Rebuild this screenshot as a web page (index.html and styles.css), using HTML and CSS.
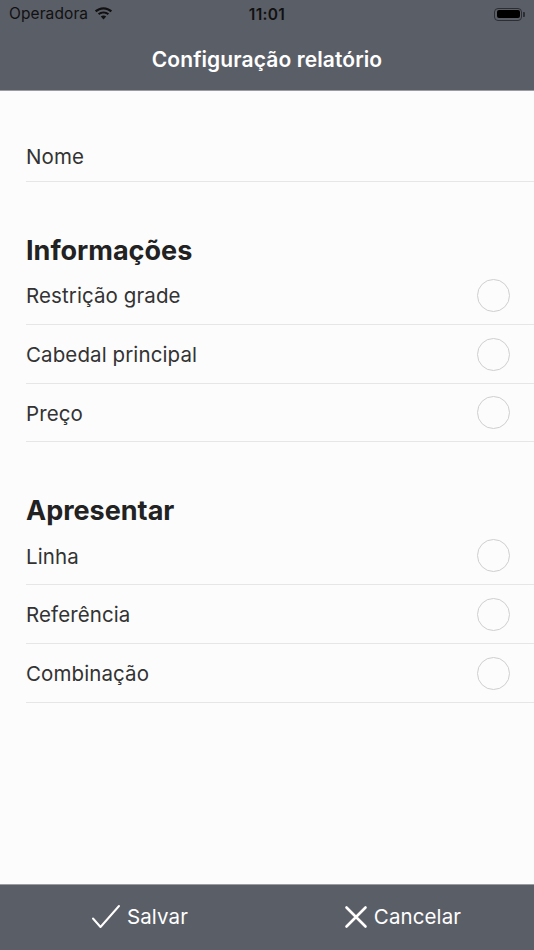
FILE: index.html
```html
<!DOCTYPE html>
<html lang="pt">
<head>
<meta charset="utf-8">
<title>Configuração relatório</title>
<link rel="stylesheet" href="styles.css">
</head>
<body>
<div class="screen">
  <header class="topbar">
    <div class="status">
      <div class="status-left">
        <span class="carrier">Operadora</span>
        <svg class="wifi" width="19" height="14" viewBox="0 0 19 14">
          <path d="M9.5 1.2c3.3 0 6.3 1.3 8.6 3.4l-1.5 1.6C14.7 4.5 12.2 3.4 9.5 3.4S4.3 4.5 2.4 6.2L0.9 4.6C3.2 2.5 6.2 1.2 9.5 1.2z" fill="#111"/>
          <path d="M9.5 5.4c2.2 0 4.1 0.8 5.6 2.1l-1.5 1.6c-1.1-1-2.5-1.5-4.1-1.5S6.5 8.1 5.4 9.1L3.9 7.5C5.4 6.2 7.3 5.4 9.5 5.4z" fill="#111"/>
          <path d="M9.5 9.5c1.1 0 2 0.4 2.7 1L9.5 13.4 6.8 10.5c0.7-0.6 1.6-1 2.7-1z" fill="#111"/>
        </svg>
      </div>
      <span class="clock">11:01</span>
      <div class="status-right">
        <span class="battery"><span class="battery-fill"></span></span>
        <span class="battery-nub"></span>
      </div>
    </div>
    <div class="navbar">
      <h1 class="title">Configuração relatório</h1>
    </div>
  </header>

  <main class="content">
    <div class="row row-name">
      <span class="label">Nome</span>
    </div>

    <h2 class="section-title">Informações</h2>
    <div class="row"><span class="label">Restrição grade</span><span class="radio"></span></div>
    <div class="row"><span class="label">Cabedal principal</span><span class="radio"></span></div>
    <div class="row"><span class="label">Preço</span><span class="radio"></span></div>

    <h2 class="section-title">Apresentar</h2>
    <div class="row"><span class="label">Linha</span><span class="radio"></span></div>
    <div class="row"><span class="label">Referência</span><span class="radio"></span></div>
    <div class="row"><span class="label">Combinação</span><span class="radio"></span></div>
  </main>

  <footer class="toolbar">
    <button class="action action-save">
      <svg width="30" height="26" viewBox="0 0 30 26">
        <path d="M2 14.5 L9.5 23 L28 2" fill="none" stroke="#fff" stroke-width="2" stroke-linecap="round" stroke-linejoin="round"/>
      </svg>
      <span>Salvar</span>
    </button>
    <button class="action">
      <svg width="24" height="24" viewBox="0 0 24 24">
        <path d="M2.5 2.5 L21.5 21.5 M21.5 2.5 L2.5 21.5" fill="none" stroke="#fff" stroke-width="2.6" stroke-linecap="round"/>
      </svg>
      <span>Cancelar</span>
    </button>
  </footer>
</div>
</body>
</html>
```

FILE: styles.css
```css
* { box-sizing: border-box; }

html, body {
  margin: 0;
  padding: 0;
}

body {
  font-family: Inter, "Noto Sans", "Liberation Sans", sans-serif;
  background: #fcfcfc;
}

.screen {
  width: 534px;
  height: 950px;
  display: flex;
  flex-direction: column;
  overflow: hidden;
}

.topbar {
  background: #5a5e67;
  border-bottom: 1px solid #9a9ca2;
  height: 91px;
  flex: none;
}

.status {
  height: 28px;
  display: flex;
  align-items: center;
  justify-content: space-between;
  padding: 0 9px 0 9px;
  position: relative;
}

.status-left {
  display: flex;
  align-items: center;
  gap: 6px;
  padding-bottom: 1px;
}

.carrier {
  font-size: 15.5px;
  color: #111;
  letter-spacing: 0.1px;
}

.wifi { display: block; margin-top: -2px; }

.clock {
  position: absolute;
  left: 0;
  right: 0;
  text-align: center;
  font-size: 15.5px;
  font-weight: 600;
  color: #111;
  letter-spacing: 0.3px;
  pointer-events: none;
}

.status-right {
  display: flex;
  align-items: center;
  gap: 1px;
}

.battery {
  display: block;
  width: 28px;
  height: 13px;
  border: 1.5px solid #2c2e33;
  border-radius: 4px;
  padding: 1.5px;
}

.battery-fill {
  display: block;
  width: 100%;
  height: 100%;
  background: #000;
  border-radius: 2px;
}

.battery-nub {
  display: block;
  width: 2px;
  height: 5px;
  background: #2c2e33;
  border-radius: 0 1px 1px 0;
}

.navbar {
  height: 62px;
  display: flex;
  align-items: center;
  justify-content: center;
}

.title {
  margin: 0;
  font-size: 21px;
  font-weight: 600;
  color: #fff;
  letter-spacing: 0.1px;
}

.content {
  flex: 1;
  background: #fcfcfc;
  padding-top: 38px;
}

.row {
  margin-left: 26px;
  padding-right: 24px;
  height: 58.75px;
  border-bottom: 1px solid #e6e6e6;
  display: flex;
  align-items: center;
  justify-content: space-between;
}

.row-name {
  height: 53px;
  padding-bottom: 0;
}

.label {
  font-size: 20.5px;
  color: #333;
  letter-spacing: 0.1px;
  padding-top: 2px;
}

.radio {
  width: 33px;
  height: 33px;
  border: 1.5px solid #cfcfcf;
  border-radius: 50%;
  flex: none;
  margin-top: 1px;
}

.section-title {
  margin: 52px 0 0 26px;
  height: 32px;
  line-height: 34px;
  font-size: 27px;
  font-weight: 700;
  color: #222;
  letter-spacing: 0;
}

.toolbar {
  flex: none;
  height: 66px;
  background: #5a5e67;
  border-top: 1px solid #9a9ca2;
  display: flex;
}

.action {
  flex: 1;
  display: flex;
  align-items: center;
  justify-content: center;
  gap: 6px;
  background: none;
  border: 0;
  padding: 0 0 2px 0;
  margin: 0;
  font-family: inherit;
  font-size: 20.5px;
  letter-spacing: 0.1px;
  color: #fff;
  cursor: pointer;
}

.action-save {
  padding-left: 8px;
}

.action svg { display: block; }
```
